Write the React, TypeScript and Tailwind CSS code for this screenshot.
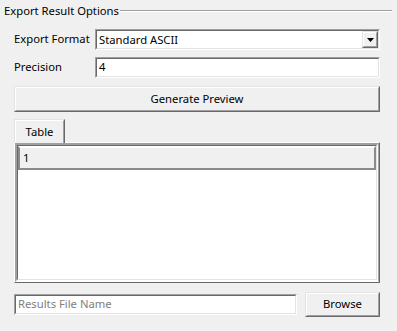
import React from "react";

const font = { fontFamily: '"Segoe UI", "Noto Sans", "Open Sans", sans-serif' };

function Sunken({ className = "", inner = "", children }: { className?: string; inner?: string; children?: React.ReactNode }) {
  return (
    <div className={`border border-[#a0a0a0] border-r-white border-b-white ${className}`}>
      <div className={`h-full w-full border border-[#696969] border-r-[#e3e3e3] border-b-[#e3e3e3] ${inner}`}>{children}</div>
    </div>
  );
}

function Raised({ className = "", inner = "", children }: { className?: string; inner?: string; children?: React.ReactNode }) {
  return (
    <div className={`border border-[#e3e3e3] border-r-[#696969] border-b-[#696969] ${className}`}>
      <div className={`h-full w-full border border-white border-r-[#a0a0a0] border-b-[#a0a0a0] bg-[#f0f0f0] ${inner}`}>{children}</div>
    </div>
  );
}

export default function App() {
  return (
    <div className="w-[397px] h-[331px] bg-[#f0f0f0] text-[11.25px] text-black overflow-hidden" style={font}>
      <div className="flex items-center pl-[4px] pr-[5px] h-[21px]">
        <span className="leading-[16px]">Export Result Options</span>
        <div className="flex-1 h-[2px] border-t border-[#a0a0a0] border-b border-b-white ml-[1px] mt-[0px]" />
      </div>
      <div className="pl-[14px] pr-[17px] pt-[8px]">
        <div className="flex items-center h-[21px]">
          <span className="w-[81px]">Export Format</span>
          <Sunken className="flex-1 h-[21px] bg-white" inner="flex items-center bg-white">
            <span className="pl-[2px] flex-1 leading-[15px]">Standard ASCII</span>
            <Raised className="w-[16px] h-[17px]" inner="flex items-center justify-center">
              <svg width="7" height="4" viewBox="0 0 7 4"><path d="M0 0h7L3.5 4z" fill="#000" /></svg>
            </Raised>
          </Sunken>
        </div>
        <div className="flex items-center h-[21px] mt-[7px]">
          <span className="w-[81px]">Precision</span>
          <Sunken className="flex-1 h-[21px]" inner="flex items-center bg-white">
            <span className="pl-[2px]">4</span>
          </Sunken>
        </div>
        <Raised className="mt-[8px] h-[26px]" inner="flex items-center justify-center">
          <span>Generate Preview</span>
        </Raised>
        <div className="mt-[7px] flex">
          <div className="w-[51px] h-[24px] border border-[#e3e3e3] border-r-[#696969] border-b-0 bg-[#f0f0f0] flex items-center justify-center">
            <div className="h-full w-full border-t border-l border-white border-r border-r-[#a0a0a0] flex items-center justify-center">Table</div>
          </div>
        </div>
        <div className="h-[141px] border border-white border-r-[#696969] border-b-[#696969] border-t-white -mt-[1px]">
          <div className="h-full border border-[#a0a0a0] border-r-[#a0a0a0] border-b-white">
            <Sunken className="h-full" inner="bg-white flex flex-col">
              <div className="h-[24px] bg-[#f0f0f0] border-2 border-[#8a8a8a] border-t-white flex items-center pl-[3px] text-black">1</div>
            </Sunken>
          </div>
        </div>
        <div className="mt-[9px] flex items-center gap-[8px]">
          <Sunken className="w-[283px] h-[21px]" inner="bg-white flex items-center">
            <span className="pl-[2px] text-[#808080]">Results File Name</span>
          </Sunken>
          <Raised className="flex-1 h-[25px]" inner="flex items-center justify-center">
            <span>Browse</span>
          </Raised>
        </div>
      </div>
    </div>
  );
}
